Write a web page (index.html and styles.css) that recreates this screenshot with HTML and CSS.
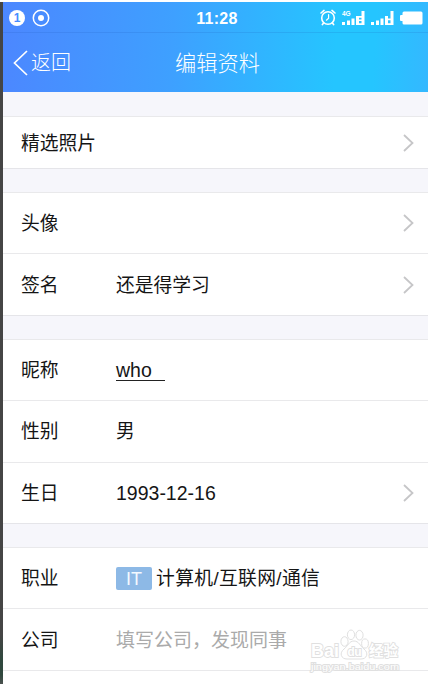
FILE: index.html
```
<!DOCTYPE html>
<html lang="zh-CN">
<head>
    <meta charset="UTF-8">
    <meta name="viewport" content="width=device-width, initial-scale=1.0">
    <title>编辑资料</title>
    <link rel="stylesheet" href="styles.css">
</head>
<body>
    <div class="screen">
        <header class="header">
            <div class="status-bar">
                <div class="status-left">
                    <span class="badge">1</span>
                    <svg class="record" viewBox="0 0 18 18" fill="none" stroke="#fff">
                        <circle cx="9" cy="9" r="7.7" stroke-width="1.5"></circle>
                        <circle cx="9" cy="9" r="3" fill="#fff" stroke="none"></circle>
                    </svg>
                </div>
                <span class="time">11:28</span>
                <div class="status-right">
                    <svg class="alarm" viewBox="0 0 16 17" fill="none" stroke="#fff" stroke-width="1.6" stroke-linecap="round">
                        <circle cx="8" cy="9" r="6.3"></circle>
                        <path d="M1 4 L4 1.4 M15 4 L12 1.4 M3.6 14 L2.4 15.6 M12.4 14 L13.6 15.6"></path>
                        <path d="M8.6 5.5 V9.2 L6.4 11.2" stroke-width="1.2"></path>
                    </svg>
                    <svg class="signal" viewBox="0 0 23 16" fill="#fff">
                        <text x="0" y="5.6">4G</text>
                        <path d="M0 12h3v3H0z M5 10.5h3V15H5z M9.5 8.5h3V15h-3z M14 6h3v9h-3z M19.5 1h3v14h-3z M16 6h4v1.8h-4z M16 9.5h4v1.5h-4z M16 13.2h4V15h-4z"></path>
                    </svg>
                    <svg class="signal" viewBox="0 0 23 16" fill="#fff">
                        <path d="M0 12h3v3H0z M5 10.5h3V15H5z M9.5 8.5h3V15h-3z M14 6h3v9h-3z M19.5 1h3v14h-3z M17 8.5h3v1.8h-3z M16 13.2h4V15h-4z"></path>
                    </svg>
                    <svg class="battery" viewBox="0 0 23 14" fill="#fff">
                        <rect x="2.5" y="0.5" width="20" height="13" rx="1.5"></rect>
                        <rect x="0" y="4" width="4" height="6" rx="1"></rect>
                    </svg>
                </div>
            </div>
            <nav class="nav">
                <a class="back">
                    <svg class="back-icon" viewBox="0 0 15 26" fill="none" stroke="#fff" stroke-width="1.7">
                        <path d="M14 1 L1.5 13 L14 25"></path>
                    </svg>
                    <span class="back-text">返回</span>
                </a>
                <h1 class="title">编辑资料</h1>
            </nav>
        </header>

        <main class="content">
            <section class="group">
                <div class="row row-short">
                    <span class="label">精选照片</span>
                    <svg class="chevron" viewBox="0 0 11 18"><path d="M1 1 L9.5 9 L1 17"></path></svg>
                </div>
            </section>

            <section class="group">
                <div class="row">
                    <span class="label">头像</span>
                    <svg class="chevron" viewBox="0 0 11 18"><path d="M1 1 L9.5 9 L1 17"></path></svg>
                </div>
                <div class="row">
                    <span class="label">签名</span>
                    <span class="value">还是得学习</span>
                    <svg class="chevron" viewBox="0 0 11 18"><path d="M1 1 L9.5 9 L1 17"></path></svg>
                </div>
            </section>

            <section class="group">
                <div class="row">
                    <span class="label">昵称</span>
                    <span class="value latin"><span class="nickname">who</span></span>
                </div>
                <div class="row">
                    <span class="label">性别</span>
                    <span class="value">男</span>
                </div>
                <div class="row">
                    <span class="label">生日</span>
                    <span class="value latin">1993-12-16</span>
                    <svg class="chevron" viewBox="0 0 11 18"><path d="M1 1 L9.5 9 L1 17"></path></svg>
                </div>
            </section>

            <section class="group">
                <div class="row">
                    <span class="label">职业</span>
                    <span class="tag">IT</span>
                    <span class="value job">计算机/互联网/通信</span>
                </div>
                <div class="row">
                    <span class="label">公司</span>
                    <span class="value placeholder">填写公司，发现同事</span>
                </div>
                <div class="row"></div>
            </section>
        </main>
    </div>

    <svg class="watermark" viewBox="0 0 94 46">
        <g class="paw">
            <ellipse cx="35.5" cy="12.5" rx="3.6" ry="4.8"></ellipse>
            <ellipse cx="42" cy="5.8" rx="3.6" ry="4.8"></ellipse>
            <ellipse cx="50.5" cy="6.2" rx="3.6" ry="4.8"></ellipse>
            <ellipse cx="56" cy="14.5" rx="3.4" ry="4.6"></ellipse>
            <path d="M45 12 C50 12 51 17 55 20 C60 24 58 30 52 30 H38 C32 30 30 24 35 20 C39 17 40 12 45 12 Z"></path>
        </g>
        <text class="wm-brand" x="2" y="28" textLength="28" lengthAdjust="spacingAndGlyphs">Bai</text>
        <text class="wm-du" x="38.5" y="27" textLength="14">du</text>
        <text class="wm-cn" x="60" y="27" textLength="29">经验</text>
        <text class="wm-url" x="2" y="41" textLength="88" lengthAdjust="spacingAndGlyphs">jingyan.baidu.com</text>
    </svg>
</body>
</html>
```
FILE: styles.css
```
* {
    box-sizing: border-box;
}

body {
    margin: 0;
    height: 684px;
    overflow: hidden;
    padding-top: 2px;
    background-color: #fff;
    color: #151515;
    font-family: "Liberation Sans", "Noto Sans CJK SC", sans-serif;
    font-size: 18.8px;
}

/* dark strip along the left edge */
.screen {
    height: 682px;
    border-left: 3px solid;
    border-image: linear-gradient(#454545 0, #454545 630px, #30483e 655px, #30483e 670px, #555 682px) 3;
    overflow: hidden;
}

.header {
    height: 90px;
    color: #fff;
    background: linear-gradient(93deg, #4c87ff 0%, #3ea0ff 40%, #25c5ff 78%, #25c5ff 87%, #34b8ff 100%);
}

.status-bar {
    display: grid;
    grid-template-columns: 1fr auto 1fr;
    align-items: center;
    height: 31px;
    padding: 1px 5px 0 6px;
    border-bottom: 1px solid rgba(20, 80, 170, 0.14);
}

.status-left,
.status-right {
    display: flex;
    align-items: center;
}

.status-left {
    gap: 7px;
}

.badge {
    width: 16px;
    height: 16px;
    border-radius: 50%;
    background-color: #fff;
    color: #478dff;
    font-size: 12px;
    font-weight: bold;
    line-height: 16px;
    text-align: center;
}

.record {
    width: 18px;
    height: 18px;
}

.time {
    padding: 2px 0 0 2px;
    font-size: 16px;
    font-weight: bold;
    letter-spacing: 0.3px;
}

.status-right {
    justify-content: flex-end;
    gap: 6px;
}

.alarm {
    width: 16px;
    height: 17px;
}

.signal {
    width: 23px;
    height: 16px;
}

.signal text {
    font-size: 6.5px;
    font-weight: bold;
}

.battery {
    width: 23px;
    height: 14px;
}

.nav {
    display: grid;
    grid-template-columns: 1fr auto 1fr;
    align-items: center;
    height: 59px;
    padding: 0 6px 0 10px;
}

.back {
    display: flex;
    align-items: center;
    gap: 3px;
    font-size: 20px;
    font-weight: 300;
}

.back-icon {
    width: 15px;
    height: 26px;
}

.back-text {
    padding-bottom: 3px;
}

.title {
    margin: 0;
    padding-bottom: 3px;
    font-size: 21.2px;
    font-weight: 300;
}

.content {
    display: flex;
    flex-direction: column;
    gap: 23px;
    height: 592px;
    padding-top: 24px;
    background-color: #f6f6fb;
}

.group {
    flex: none;
    border-bottom: 1px solid #e5e5e9;
    background-color: #fff;
}

.row {
    display: flex;
    align-items: center;
    height: 61.4px;
    padding: 0 14px 0 18px;
    border-top: 1px solid #e9e9eb;
}

.row-short {
    height: 52px;
}

.label {
    width: 95px;
    padding-bottom: 3px;
    white-space: nowrap;
}

.value {
    padding-bottom: 3px;
}

.latin {
    padding: 1px 0 0;
    font-size: 19.5px;
}

.nickname {
    display: block;
    width: 49px;
    border-bottom: 1px solid #222;
    line-height: 20px;
}

.job {
    letter-spacing: 0.35px;
}

.tag {
    width: 36px;
    height: 23px;
    margin-right: 4px;
    border-radius: 2px;
    background-color: #8db9e6;
    color: #f4f9ff;
    font-size: 18px;
    line-height: 24px;
    text-align: center;
}

.placeholder {
    color: #aaa;
    font-size: 19px;
}

.chevron {
    width: 11px;
    height: 18px;
    margin-left: auto;
    fill: none;
    stroke: #c6c6c8;
    stroke-width: 1.8;
}

.watermark {
    position: absolute;
    left: 309px;
    top: 629px;
    width: 94px;
    height: 46px;
    fill: #fff;
    stroke: #e0e0e0;
    stroke-width: 1;
}

.watermark text {
    paint-order: stroke;
    stroke-width: 1.8;
}

.wm-brand {
    font-size: 18px;
    font-weight: bold;
}

.wm-du {
    font-size: 12px;
    font-weight: bold;
}

.wm-cn {
    font-size: 14.5px;
    font-weight: bold;
}

.wm-url {
    font-size: 9.5px;
}
```
